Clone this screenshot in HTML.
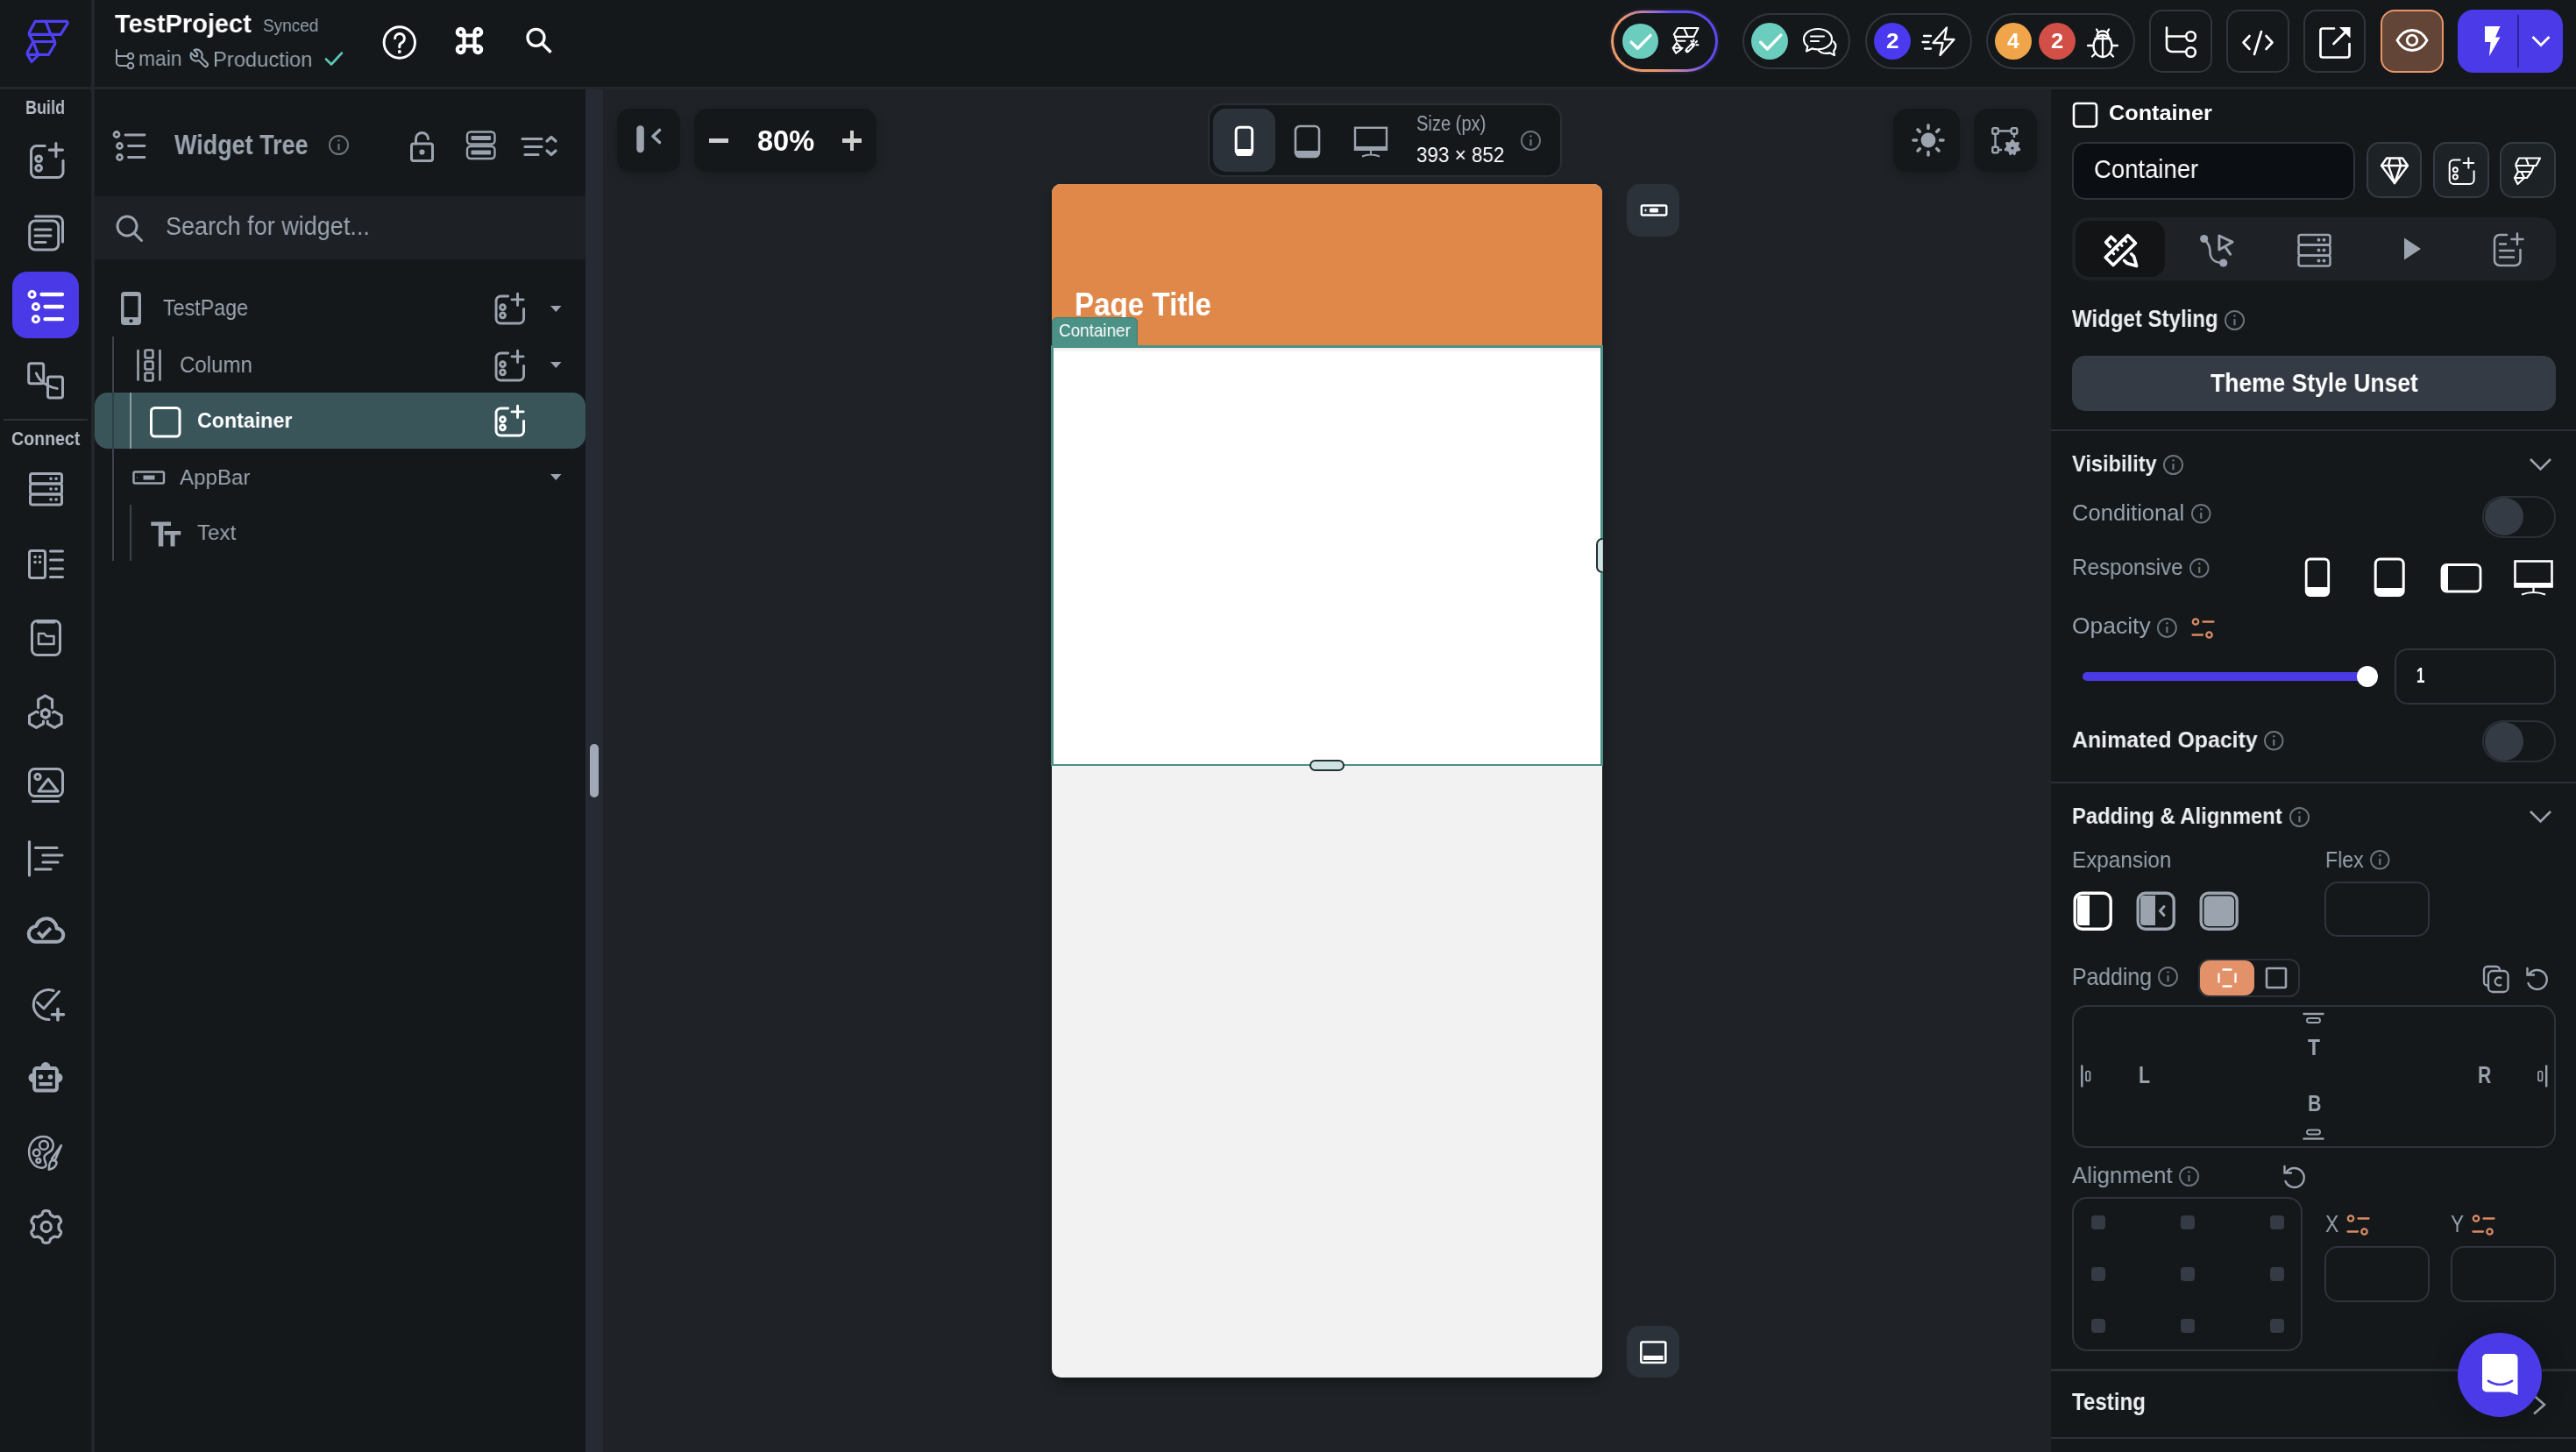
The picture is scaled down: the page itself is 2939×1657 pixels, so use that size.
<!DOCTYPE html>
<html><head><meta charset="utf-8"><title>FlutterFlow</title>
<style>
html,body{margin:0;padding:0;width:2939px;height:1657px;overflow:hidden;background:#14181b;}
body{position:relative;font-family:"Liberation Sans",sans-serif;}
.a{position:absolute;box-sizing:border-box;}
.t{position:absolute;line-height:1;will-change:transform;white-space:nowrap;transform-origin:0 0;font-family:"Liberation Sans",sans-serif;}
svg.a{overflow:visible;}
</style></head><body>
<div class="a" style="left:0.00px;top:0.00px;width:2939.00px;height:1657.00px;background:#14181b"></div>
<div class="a" style="left:688.00px;top:102.00px;width:1652.00px;height:1555.00px;background:#1f2327"></div>
<div class="a" style="left:0.00px;top:99.00px;width:2939.00px;height:2.70px;background:#22272b"></div>
<div class="a" style="left:104.00px;top:0.00px;width:4.00px;height:1657.00px;background:#22272b"></div>
<svg class="a" style="left:20.00px;top:15.00px;" width="70.00" height="65.00" viewBox="0 0 70.00 65.00" fill="none"><g stroke="#5040f5" stroke-width="3.2" stroke-linejoin="round" stroke-linecap="round" transform="translate(-20,-15)">
<path d="M40.1 24.4 H76.4 L77.2 26.6 L69.2 39.4 H33.4 L33.4 37 Z"/>
<path d="M52.2 24.4 L57.8 39.4"/>
<path d="M33.4 39.4 L37.9 47.5 H62.5 L59 39.4"/>
<path d="M37.9 47.5 L31.4 59.5 V62.4 H55.4 L62.8 50 L62.5 47.5"/>
<path d="M38.6 49.5 L43.5 62.4"/>
<path d="M31.4 62.4 L36.1 70.5 L43.5 63"/>
</g></svg>
<div class="t" style="left:131.20px;top:12.45px;font-size:29.36px;color:#ffffff;font-weight:700;transform:scaleX(0.9878);">TestProject</div>
<div class="t" style="left:300.00px;top:18.97px;font-size:20.35px;color:#95a1ac;font-weight:400;transform:scaleX(0.9342);">Synced</div>
<svg class="a" style="left:131.00px;top:55.00px;" width="23.00" height="24.00" viewBox="0 0 23.00 24.00" fill="none"><g stroke="#95a1ac" stroke-width="2" stroke-linecap="round" transform="translate(-131,-55)">
<path d="M133 57 V71 a4 4 0 0 0 4 4 H145.5"/><path d="M133 64 H145.5"/>
<circle cx="149" cy="64" r="3.3"/><circle cx="149" cy="75" r="3.3"/></g></svg>
<div class="t" style="left:158.40px;top:56.11px;font-size:23.50px;color:#95a1ac;font-weight:400;transform:scaleX(0.9735);">main</div>
<svg class="a" style="left:215.00px;top:54.00px;" width="25.00" height="25.00" viewBox="0.5 0.5 23.5 23.5" fill="none"><g stroke="#95a1ac" stroke-width="2" stroke-linecap="round" stroke-linejoin="round"><path d="M7 10h3v-3l-3.5 -3.5a6 6 0 0 1 8 8l6 6a2 2 0 0 1 -3 3l-6 -6a6 6 0 0 1 -8 -8l3.5 3.5"/></g></svg>
<div class="t" style="left:243.00px;top:55.68px;font-size:24.13px;color:#95a1ac;font-weight:400;transform:scaleX(0.9830);">Production</div>
<svg class="a" style="left:370.00px;top:58.00px;" width="22.00" height="19.00" viewBox="0 0 22.00 19.00" fill="none"><path d="M2 9.5 L8 15.5 L20 2.5" stroke="#5ec4b6" stroke-width="2.6" stroke-linecap="round" stroke-linejoin="round"/></svg>
<svg class="a" style="left:436.00px;top:29.00px;" width="40.00" height="40.00" viewBox="0 0 40.00 40.00" fill="none"><circle cx="19.8" cy="19.5" r="17.7" stroke="#fff" stroke-width="2.9"/><path d="M14.6 14.8 a5.4 5.4 0 1 1 7.6 5 c-1.6 .8 -2.4 1.8 -2.4 3.6 v1.4" stroke="#fff" stroke-width="3" stroke-linecap="round"/><circle cx="19.8" cy="30" r="2" fill="#fff"/></svg>
<svg class="a" style="left:520.00px;top:31.40px;" width="31.00" height="30.90" viewBox="0 0 31.00 30.90" fill="none"><path d="M9.5 5.65 V25.35 A3.85 3.85 0 1 1 5.65 21.5 H25.35 A3.85 3.85 0 1 1 21.5 25.35 V5.65 A3.85 3.85 0 1 1 25.35 9.5 H5.65 A3.85 3.85 0 1 1 9.5 5.65 Z" stroke="#fff" stroke-width="4.2" stroke-linejoin="round"/></svg>
<svg class="a" style="left:599.00px;top:30.00px;" width="33.00" height="33.00" viewBox="0 0 33.00 33.00" fill="none"><circle cx="12.5" cy="12.8" r="9.5" stroke="#fff" stroke-width="3.3"/><path d="M19.5 19.8 L29.5 29.8" stroke="#fff" stroke-width="3.6"/></svg>
<div class="a" style="left:1838.00px;top:12.00px;width:122.00px;height:70.00px;border-radius:35px;background:linear-gradient(57deg,#ee9a62 0%,#ec9866 30%,#c583a0 45%,#9a6dd0 56%,#5d4bf3 68%,#5b49f4 100%);box-shadow:0 0 4px rgba(140,100,200,.3)"></div>
<div class="a" style="left:1841.00px;top:15.00px;width:116.00px;height:64.00px;border-radius:32px;background:#14181b"></div>
<div class="a" style="left:1851.00px;top:26.50px;width:40.50px;height:40.50px;border-radius:50%;background:#6bcdbd"></div>
<svg class="a" style="left:1851.00px;top:26.50px;" width="40.50" height="40.50" viewBox="0 0 40.50 40.50" fill="none"><path d="M10.1 21.1 L17.4 28.3 L32.0 13.4" stroke="#fff" stroke-width="3.4" stroke-linecap="round" stroke-linejoin="round"/></svg>
<svg class="a" style="left:1906.00px;top:28.00px;" width="36.00" height="36.00" viewBox="0 0 36.00 36.00" fill="none"><g stroke="#fff" stroke-width="2.1" stroke-linejoin="round" stroke-linecap="round" transform="translate(-1906,-28)">
<path d="M1914.3 32 H1937.5 L1932.4 41.9 H1911.5 L1909.8 39.3 Z"/><path d="M1921.3 32.2 L1925.6 41.9"/>
<path d="M1911 42 L1913 46.8 H1922.5"/>
<path d="M1913 49 L1908.6 54.8 L1912.2 60.6 L1918.6 55.6 L1913 49 M1908.6 54.8 H1919.5"/>
<path d="M1932.3 45.2 V47.3 M1936 47 L1934.6 48.4 M1937.4 51.2 H1935.4 M1929.3 46.8 L1930.3 47.8"/>
</g><path d="M1925 57.6 L1931.4 51.2" stroke="#fff" stroke-width="5.2" stroke-linecap="round" transform="translate(-1906,-28)"/><path d="M1926 56.6 L1929.8 52.8" stroke="#14181b" stroke-width="1.4" stroke-linecap="round" transform="translate(-1906,-28)"/></svg>
<div class="a" style="left:1988.00px;top:15.00px;width:123.00px;height:64.00px;border-radius:32px;border:2px solid #30363d"></div>
<div class="a" style="left:1997.60px;top:25.60px;width:42.80px;height:42.80px;border-radius:50%;background:#6bcdbd"></div>
<svg class="a" style="left:1997.60px;top:25.60px;" width="42.80" height="42.80" viewBox="0 0 42.80 42.80" fill="none"><path d="M10.7 22.3 L18.4 30.0 L33.8 14.1" stroke="#fff" stroke-width="3.4" stroke-linecap="round" stroke-linejoin="round"/></svg>
<svg class="a" style="left:2055.00px;top:30.00px;" width="41.00" height="37.00" viewBox="0 0 41.00 37.00" fill="none"><g stroke="#fff" stroke-width="2.2" stroke-linejoin="round" stroke-linecap="round" transform="translate(-2055,-30)">
<path d="M2074 33 c-9 0 -16 5.2 -16 11.8 c0 3.2 1.6 6 4.3 8.1 l-1.3 5.6 l6.3 -3.1 c2 .6 4.3 .9 6.7 .9 c9 0 16 -5.2 16 -11.5 c0 -6.6 -7 -11.8 -16 -11.8 z"/>
<path d="M2066 41.5 h15 M2066 47 h9"/>
<path d="M2092 47.5 c1.6 1.5 2.4 3.3 2.4 5.3 c0 2 -.8 3.8 -2.3 5.3 l.8 5 l-5 -2.7 c-1.3 .3 -2.7 .5 -4.1 .5 c-3.6 0 -6.8 -1.2 -8.8 -3.2"/>
</g></svg>
<div class="a" style="left:2128.00px;top:15.00px;width:121.50px;height:64.00px;border-radius:32px;border:2px solid #30363d"></div>
<div class="a" style="left:2137.70px;top:25.60px;width:42.70px;height:42.70px;border-radius:50%;background:#4b39ef"></div>
<div class="t" style="left:2152.00px;top:34.68px;font-size:24.71px;color:#ffffff;font-weight:700;transform:scaleX(1.0554);">2</div>
<svg class="a" style="left:2190.00px;top:28.00px;" width="44.00" height="38.00" viewBox="0 0 44.00 38.00" fill="none"><g stroke="#fff" stroke-width="2.3" stroke-linejoin="round" stroke-linecap="round" transform="translate(-2190,-28)">
<path d="M2221 31.5 L2205.5 49 H2216.5 L2213.5 63 L2229.5 45 H2218.5 Z"/>
<path d="M2195 41 h8 M2193.5 48 h7 M2196 55.5 h7"/></g></svg>
<div class="a" style="left:2266.00px;top:15.00px;width:169.60px;height:64.00px;border-radius:32px;border:2px solid #30363d"></div>
<div class="a" style="left:2275.70px;top:25.60px;width:42.40px;height:42.40px;border-radius:50%;background:#f1a54b"></div>
<div class="t" style="left:2290.30px;top:34.68px;font-size:24.71px;color:#ffffff;font-weight:700;">4</div>
<div class="a" style="left:2325.80px;top:25.60px;width:42.40px;height:42.40px;border-radius:50%;background:#d14f46"></div>
<div class="t" style="left:2339.80px;top:34.68px;font-size:24.71px;color:#ffffff;font-weight:700;transform:scaleX(1.0336);">2</div>
<svg class="a" style="left:2379.00px;top:29.00px;" width="40.00" height="38.00" viewBox="0 0 40.00 38.00" fill="none"><g stroke="#fff" stroke-width="2.3" stroke-linecap="round" transform="translate(-2379,-29)">
<ellipse cx="2399" cy="52.5" rx="10.5" ry="12.5"/><path d="M2399 40 V65"/>
<path d="M2390.5 44 h17"/><path d="M2392.5 41 a6.5 5.5 0 0 1 13 0"/>
<path d="M2394 37 l-2 -3.5 M2404 37 l2 -3.5 M2388.5 52 h-6.5 M2409.5 52 h6.5 M2391 60.5 l-4 4 M2407 60.5 l4 4"/>
</g></svg>
<div class="a" style="left:2452.00px;top:11.00px;width:72.00px;height:72.00px;border-radius:15px;border:2px solid #30363d"></div>
<div class="a" style="left:2540.00px;top:11.00px;width:71.50px;height:72.00px;border-radius:15px;border:2px solid #30363d"></div>
<div class="a" style="left:2628.00px;top:11.00px;width:71.00px;height:72.00px;border-radius:15px;border:2px solid #30363d"></div>
<svg class="a" style="left:2468.00px;top:28.00px;" width="40.00" height="40.00" viewBox="0 0 40.00 40.00" fill="none"><g stroke="#fff" stroke-width="2.6" stroke-linecap="round" transform="translate(-2468,-28)">
<path d="M2472 31.5 V53 a6 6 0 0 0 6 6 H2494"/><path d="M2472 41.5 H2494"/>
<circle cx="2499.5" cy="41.5" r="5.3"/><circle cx="2499.5" cy="59.5" r="5.3"/></g></svg>
<svg class="a" style="left:2556.00px;top:33.00px;" width="40.00" height="32.00" viewBox="0 0 40.00 32.00" fill="none"><g stroke="#fff" stroke-width="2.6" stroke-linecap="round" stroke-linejoin="round" transform="translate(-2556,-33)"><path d="M2566.5 41 L2559.5 48.5 L2566.5 56"/><path d="M2585.5 41 L2592.5 48.5 L2585.5 56"/><path d="M2580 36 L2572 62"/></g></svg>
<svg class="a" style="left:2644.00px;top:28.00px;" width="42.00" height="40.00" viewBox="0 0 42.00 40.00" fill="none"><g stroke="#fff" stroke-width="2.7" stroke-linecap="round" stroke-linejoin="round" transform="translate(-2644,-28)">
<path d="M2663 32.5 H2650 a2.5 2.5 0 0 0 -2.5 2.5 V63 a2.5 2.5 0 0 0 2.5 2.5 H2678 a2.5 2.5 0 0 0 2.5 -2.5 V50"/>
<path d="M2662.5 50 L2678 34.5"/></g><path d="M2669 31 H2681.5 V43.5 Z" fill="#fff" transform="translate(-2644,-28)"/></svg>
<div class="a" style="left:2715.80px;top:10.80px;width:72.20px;height:72.40px;border-radius:16px;background:#634537;border:2.6px solid #e99467"></div>
<svg class="a" style="left:2732.00px;top:32.00px;" width="40.00" height="28.00" viewBox="0 0 40.00 28.00" fill="none"><g stroke="#fff" stroke-width="2.8" transform="translate(-2732,-32)">
<path d="M2735 46 C2740 37 2746 34.5 2752 34.5 C2758 34.5 2764 37 2769 46 C2764 55 2758 57.5 2752 57.5 C2746 57.5 2740 55 2735 46 Z"/>
<circle cx="2752" cy="46" r="5.8"/></g></svg>
<div class="a" style="left:2803.70px;top:10.80px;width:120.30px;height:72.40px;border-radius:18px;background:#4a3ae8"></div>
<div class="a" style="left:2871.80px;top:17.00px;width:2.40px;height:60.00px;background:#2c2596"></div>
<svg class="a" style="left:2832.00px;top:28.00px;" width="24.00" height="38.00" viewBox="0 0 24.00 38.00" fill="none"><path d="M2835 30 H2852.5 L2847 42.5 H2852.5 L2840 64.2 L2841.5 48 H2835 Z" fill="#fff" transform="translate(-2832,-28)"/></svg>
<svg class="a" style="left:2886.00px;top:38.00px;" width="26.00" height="19.00" viewBox="0 0 26.00 19.00" fill="none"><path d="M3.5 4 L13 13.5 L22.5 4" stroke="#fff" stroke-width="2.8"/></svg>
<div class="t" style="left:29.00px;top:112.37px;font-size:21.66px;color:#b5bcc6;font-weight:700;transform:scaleX(0.8311);">Build</div>
<svg class="a" style="left:31.70px;top:161.70px;" width="40.50" height="40.50" viewBox="0 0 40.50 40.50" fill="none"><g stroke="#a1a9b5" stroke-width="3.0" stroke-linecap="round" stroke-linejoin="round"><g transform="scale(1.0125)"><path d="M19 4.5 H9.5 a6 6 0 0 0 -6 6 V34 a6 6 0 0 0 6 6 H33.5 a6 6 0 0 0 6 -6 V21"/><path d="M31.5 1.5 V16.5 M24 9 H39"/><circle cx="12" cy="19" r="3.3"/><circle cx="12" cy="29.5" r="3.3"/></g></g></svg>
<svg class="a" style="left:32.00px;top:245.00px;" width="42.00" height="42.00" viewBox="0 0 42.00 42.00" fill="none"><g stroke="#a1a9b5" stroke-width="3" stroke-linecap="round" stroke-linejoin="round"><rect x="1.7" y="7" width="33" height="33" rx="6.5"/><path d="M8.5 2 H33.5 a6 6 0 0 1 6 6 V31"/><path d="M8 17 H26 M8 24 H26 M8 31.5 H20"/></g></svg>
<div class="a" style="left:14.20px;top:309.60px;width:75.80px;height:76.00px;border-radius:17px;background:#4a39e6"></div>
<svg class="a" style="left:31.00px;top:330.00px;" width="42.00" height="41.00" viewBox="0 0 42.00 41.00" fill="none"><g stroke="#fff" stroke-width="3" stroke-linecap="round" stroke-linejoin="round"><circle cx="5.6" cy="6" r="3.5" stroke-width="3.1"/><circle cx="9.9" cy="20" r="3.5" stroke-width="3.1"/><circle cx="9.9" cy="34.2" r="3.5" stroke-width="3.1"/><path d="M16.5 6 H40 M20.5 20 H40 M20.5 34.2 H40" stroke-width="4.3"/></g></svg>
<svg class="a" style="left:31.00px;top:413.00px;" width="42.00" height="42.00" viewBox="0 0 42.00 42.00" fill="none"><g stroke="#a1a9b5" stroke-width="3" stroke-linecap="round" stroke-linejoin="round"><rect x="1.7" y="1.7" width="17" height="23" rx="2.5"/><rect x="23.5" y="17" width="17" height="24" rx="2.5"/><path d="M10.4 13 C14 22 22 28 34.2 30.4"/></g></svg>
<div class="a" style="left:3.80px;top:477.80px;width:96.20px;height:1.80px;background:#2b3036"></div>
<div class="t" style="left:12.70px;top:489.80px;font-size:22.09px;color:#b5bcc6;font-weight:700;transform:scaleX(0.8860);">Connect</div>
<svg class="a" style="left:32.50px;top:539.00px;" width="39.00" height="41.00" viewBox="0 0 39.00 41.00" fill="none"><g stroke="#a1a9b5" stroke-width="3" stroke-linecap="round" stroke-linejoin="round"><rect x="1.5" y="1.5" width="36" height="11.5" rx="2.5"/><rect x="1.5" y="13" width="36" height="12" rx="2.5"/><rect x="1.5" y="25" width="36" height="12" rx="2.5"/><path d="M25 7.3 h.1 M31 7.3 h.1 M25 19 h.1 M31 19 h.1 M25 31 h.1 M31 31 h.1" stroke-width="3.6"/></g></svg>
<svg class="a" style="left:31.50px;top:627.00px;" width="41.00" height="34.00" viewBox="0 0 41.00 34.00" fill="none"><g stroke="#a1a9b5" stroke-width="3" stroke-linecap="round" stroke-linejoin="round"><rect x="1.5" y="1.5" width="18" height="31" rx="2.5"/><path d="M8 8.5 h.1 M13.5 8.5 h.1 M8 14.5 h.1 M13.5 14.5 h.1" stroke-width="3.5"/><path d="M25.5 2 H39.5 M25.5 12 H39.5 M25.5 22 H39.5 M25.5 31.5 H39.5"/></g></svg>
<svg class="a" style="left:34.50px;top:707.00px;" width="35.00" height="42.00" viewBox="0 0 35.00 42.00" fill="none"><g stroke="#a1a9b5" stroke-width="3" stroke-linecap="round" stroke-linejoin="round"><rect x="1.5" y="1.5" width="32" height="39" rx="6"/><path d="M8 3 H27"/><path d="M9 16 H15.5 L18 19 H26.5 V28 H9 Z" stroke-width="2.5"/></g></svg>
<svg class="a" style="left:20.00px;top:780.00px;" width="65.00" height="65.00" viewBox="0 0 65.00 65.00" fill="none"><g stroke="#a1a9b5" stroke-width="3.1" stroke-linecap="round" stroke-linejoin="round"><path d="M23.63 27.60 L23.63 18.40 L31.60 13.80 L39.57 18.40 L39.57 27.60"/><path d="M23.25 33.01 L21.50 32.00 L13.53 36.60 L13.53 45.80 L21.50 50.40 L29.47 45.80 L29.47 43.04"/><path d="M40.45 33.01 L42.20 32.00 L50.17 36.60 L50.17 45.80 L42.20 50.40 L34.23 45.80 L34.23 43.04"/><path d="M31.85 29.30 L36.18 31.80 L36.18 36.80 L31.85 39.30 L27.52 36.80 L27.52 31.80 Z"/></g></svg>
<svg class="a" style="left:31.50px;top:875.50px;" width="41.00" height="41.00" viewBox="0 0 41.00 41.00" fill="none"><g stroke="#a1a9b5" stroke-width="3" stroke-linecap="round" stroke-linejoin="round"><rect x="1.5" y="1.5" width="38" height="31" rx="6"/><circle cx="11" cy="10.5" r="3.2"/><path d="M12 27 L23 13 L34 27 Z"/><path d="M5.5 38.5 H34.5"/></g></svg>
<svg class="a" style="left:31.50px;top:959.00px;" width="41.00" height="41.50" viewBox="0 0 41.00 41.50" fill="none"><g stroke="#a1a9b5" stroke-width="3.2" stroke-linecap="round" stroke-linejoin="round"><path d="M1.5 1.5 V40"/><path d="M8.5 8.5 H33 M17 17 H39 M17 25 H34 M8.5 33 H26"/></g></svg>
<svg class="a" style="left:25.00px;top:1035.00px;" width="55.00" height="55.00" viewBox="0 0 55.00 55.00" fill="none"><g stroke="#a1a9b5" stroke-width="4" stroke-linecap="round" stroke-linejoin="round"><path d="M15.5 39.8 H39.5 A7.6 7.6 0 0 0 39.8 24.6 A12 12 0 0 0 16.3 21.9 A9 9 0 0 0 15.5 39.8 Z"/><path d="M18.4 28.8 L23.3 33.8 L32.8 24.2" stroke-linecap="butt" stroke-linejoin="miter"/></g></svg>
<svg class="a" style="left:33.00px;top:1127.00px;" width="42.50" height="38.00" viewBox="0 0 42.50 38.00" fill="none"><g stroke="#a1a9b5" stroke-width="3" stroke-linecap="round" stroke-linejoin="round"><path d="M28 3.5 a17 17 0 1 0 -5 33"/><path d="M9.5 17 L17 24 L34.5 4.5"/><path d="M33 24.5 V37 M26.5 30.8 H39.5" stroke-width="3.6"/></g></svg>
<svg class="a" style="left:25.00px;top:1200.00px;" width="55.00" height="55.00" viewBox="0 0 55.00 55.00" fill="none"><g stroke="#a1a9b5" stroke-width="4" stroke-linecap="round" stroke-linejoin="round"><rect x="14.1" y="19" width="25.8" height="25.6" rx="3"/><path d="M21.6 17.5 A5.4 5.4 0 0 1 32.4 17.5 Z" fill="#a1a9b5" stroke="none"/><path d="M13 24.4 A5.5 5.5 0 0 0 13 35.4 Z M41 24.4 A5.5 5.5 0 0 1 41 35.4 Z" fill="#a1a9b5" stroke="none"/><circle cx="21.4" cy="29" r="2.8" fill="#a1a9b5" stroke="none"/><circle cx="32.5" cy="29" r="2.8" fill="#a1a9b5" stroke="none"/><rect x="19.5" y="35" width="15.2" height="4.2" fill="#a1a9b5" stroke="none"/></g></svg>
<svg class="a" style="left:25.00px;top:1288.00px;" width="55.00" height="55.00" viewBox="0 0 55.00 55.00" fill="none"><g stroke="#a1a9b5" stroke-width="2.5" stroke-linecap="round" stroke-linejoin="round"><path d="M24.6 8.9 C15 8.9 8.1 16.5 8.1 26.5 C8.1 37 15 44.7 22.5 44.7 C26.5 44.7 28.5 42.5 27.3 39.5 C26 36 24.5 33.5 26 31 C27.5 28.5 31 27.5 33.5 25 C36 22.5 36 17.8 35.4 16.5 C34 11.5 30 8.9 24.6 8.9 Z"/><circle cx="25" cy="18.9" r="4.9"/><circle cx="16.7" cy="27.5" r="3.8"/><circle cx="18.8" cy="36.6" r="2.4"/><path d="M45 19 L37.5 36.5 L34 34.5 Z"/><path d="M33.8 36.5 C31 38 31 42 30.8 46.8 C35.5 45.5 39 43 39.5 39.5 C40 37 36 35.5 33.8 36.5 Z"/></g></svg>
<svg class="a" style="left:32.50px;top:1379.00px;" width="39.50" height="42.00" viewBox="0 0 39.50 42.00" fill="none"><g stroke="#a1a9b5" stroke-width="3.2" stroke-linecap="round" stroke-linejoin="round"><path d="M19.75 2.70 L20.07 2.70 L20.39 2.72 L20.71 2.74 L21.02 2.77 L21.34 2.81 L21.66 2.86 L21.97 2.94 L22.28 3.03 L22.58 3.16 L22.87 3.33 L23.14 3.56 L23.39 3.87 L23.61 4.26 L23.81 4.73 L23.97 5.26 L24.12 5.78 L24.26 6.25 L24.41 6.65 L24.58 6.97 L24.76 7.22 L24.96 7.43 L25.17 7.60 L25.38 7.74 L25.59 7.88 L25.81 8.00 L26.03 8.13 L26.25 8.25 L26.47 8.37 L26.68 8.49 L26.90 8.62 L27.12 8.74 L27.33 8.87 L27.54 9.00 L27.76 9.13 L27.97 9.25 L28.19 9.38 L28.42 9.50 L28.65 9.61 L28.90 9.70 L29.17 9.77 L29.48 9.80 L29.85 9.79 L30.27 9.72 L30.75 9.61 L31.28 9.47 L31.81 9.36 L32.31 9.29 L32.76 9.28 L33.16 9.35 L33.49 9.47 L33.79 9.63 L34.05 9.83 L34.28 10.05 L34.50 10.28 L34.71 10.53 L34.90 10.78 L35.09 11.04 L35.27 11.31 L35.44 11.58 L35.60 11.85 L35.75 12.13 L35.90 12.41 L36.04 12.70 L36.18 12.99 L36.30 13.28 L36.41 13.58 L36.50 13.89 L36.57 14.20 L36.61 14.53 L36.61 14.86 L36.55 15.22 L36.41 15.59 L36.18 15.98 L35.86 16.38 L35.49 16.78 L35.12 17.17 L34.78 17.53 L34.51 17.86 L34.31 18.17 L34.19 18.45 L34.11 18.73 L34.06 18.99 L34.04 19.25 L34.03 19.50 L34.03 19.75 L34.04 20.00 L34.04 20.25 L34.05 20.50 L34.05 20.75 L34.05 21.00 L34.05 21.25 L34.05 21.50 L34.04 21.75 L34.04 22.00 L34.03 22.25 L34.03 22.50 L34.04 22.75 L34.06 23.01 L34.11 23.27 L34.19 23.55 L34.31 23.83 L34.51 24.14 L34.78 24.47 L35.12 24.83 L35.49 25.22 L35.86 25.62 L36.18 26.02 L36.41 26.41 L36.55 26.78 L36.61 27.14 L36.61 27.47 L36.57 27.80 L36.50 28.11 L36.41 28.42 L36.30 28.72 L36.18 29.01 L36.04 29.30 L35.90 29.59 L35.75 29.87 L35.60 30.15 L35.44 30.42 L35.27 30.69 L35.09 30.96 L34.90 31.22 L34.71 31.47 L34.50 31.72 L34.28 31.95 L34.05 32.17 L33.79 32.37 L33.49 32.53 L33.16 32.65 L32.76 32.72 L32.31 32.71 L31.81 32.64 L31.28 32.53 L30.75 32.39 L30.27 32.28 L29.85 32.21 L29.48 32.20 L29.17 32.23 L28.90 32.30 L28.65 32.39 L28.42 32.50 L28.19 32.62 L27.97 32.75 L27.76 32.87 L27.54 33.00 L27.33 33.13 L27.12 33.26 L26.90 33.38 L26.68 33.51 L26.47 33.63 L26.25 33.75 L26.03 33.87 L25.81 34.00 L25.59 34.12 L25.38 34.26 L25.17 34.40 L24.96 34.57 L24.76 34.78 L24.58 35.03 L24.41 35.35 L24.26 35.75 L24.12 36.22 L23.97 36.74 L23.81 37.27 L23.61 37.74 L23.39 38.13 L23.14 38.44 L22.87 38.67 L22.58 38.84 L22.28 38.97 L21.97 39.06 L21.66 39.14 L21.34 39.19 L21.02 39.23 L20.71 39.26 L20.39 39.28 L20.07 39.30 L19.75 39.30 L19.43 39.30 L19.11 39.28 L18.79 39.26 L18.48 39.23 L18.16 39.19 L17.84 39.14 L17.53 39.06 L17.22 38.97 L16.92 38.84 L16.63 38.67 L16.36 38.44 L16.11 38.13 L15.89 37.74 L15.69 37.27 L15.53 36.74 L15.38 36.22 L15.24 35.75 L15.09 35.35 L14.92 35.03 L14.74 34.78 L14.54 34.57 L14.33 34.40 L14.12 34.26 L13.91 34.12 L13.69 34.00 L13.47 33.87 L13.25 33.75 L13.03 33.63 L12.82 33.51 L12.60 33.38 L12.38 33.26 L12.17 33.13 L11.96 33.00 L11.74 32.87 L11.53 32.75 L11.31 32.62 L11.08 32.50 L10.85 32.39 L10.60 32.30 L10.33 32.23 L10.02 32.20 L9.65 32.21 L9.23 32.28 L8.75 32.39 L8.22 32.53 L7.69 32.64 L7.19 32.71 L6.74 32.72 L6.34 32.65 L6.01 32.53 L5.71 32.37 L5.45 32.17 L5.22 31.95 L5.00 31.72 L4.79 31.47 L4.60 31.22 L4.41 30.96 L4.23 30.69 L4.06 30.42 L3.90 30.15 L3.75 29.87 L3.60 29.59 L3.46 29.30 L3.32 29.01 L3.20 28.72 L3.09 28.42 L3.00 28.11 L2.93 27.80 L2.89 27.47 L2.89 27.14 L2.95 26.78 L3.09 26.41 L3.32 26.02 L3.64 25.62 L4.01 25.22 L4.38 24.83 L4.72 24.47 L4.99 24.14 L5.19 23.83 L5.31 23.55 L5.39 23.27 L5.44 23.01 L5.46 22.75 L5.47 22.50 L5.47 22.25 L5.46 22.00 L5.46 21.75 L5.45 21.50 L5.45 21.25 L5.45 21.00 L5.45 20.75 L5.45 20.50 L5.46 20.25 L5.46 20.00 L5.47 19.75 L5.47 19.50 L5.46 19.25 L5.44 18.99 L5.39 18.73 L5.31 18.45 L5.19 18.17 L4.99 17.86 L4.72 17.53 L4.38 17.17 L4.01 16.78 L3.64 16.38 L3.32 15.98 L3.09 15.59 L2.95 15.22 L2.89 14.86 L2.89 14.53 L2.93 14.20 L3.00 13.89 L3.09 13.58 L3.20 13.28 L3.32 12.99 L3.46 12.70 L3.60 12.41 L3.75 12.13 L3.90 11.85 L4.06 11.58 L4.23 11.31 L4.41 11.04 L4.60 10.78 L4.79 10.53 L5.00 10.28 L5.22 10.05 L5.45 9.83 L5.71 9.63 L6.01 9.47 L6.34 9.35 L6.74 9.28 L7.19 9.29 L7.69 9.36 L8.22 9.47 L8.75 9.61 L9.23 9.72 L9.65 9.79 L10.02 9.80 L10.33 9.77 L10.60 9.70 L10.85 9.61 L11.08 9.50 L11.31 9.38 L11.53 9.25 L11.74 9.13 L11.96 9.00 L12.17 8.87 L12.38 8.74 L12.60 8.62 L12.82 8.49 L13.03 8.37 L13.25 8.25 L13.47 8.13 L13.69 8.00 L13.91 7.88 L14.12 7.74 L14.33 7.60 L14.54 7.43 L14.74 7.22 L14.92 6.97 L15.09 6.65 L15.24 6.25 L15.38 5.78 L15.53 5.26 L15.69 4.73 L15.89 4.26 L16.11 3.87 L16.36 3.56 L16.63 3.33 L16.92 3.16 L17.22 3.03 L17.53 2.94 L17.84 2.86 L18.16 2.81 L18.48 2.77 L18.79 2.74 L19.11 2.72 L19.43 2.70 L19.75 2.70 Z"/><circle cx="19.75" cy="21" r="5.6"/></g></svg>
<svg class="a" style="left:129.00px;top:149.00px;" width="38.00" height="37.00" viewBox="0 0 38.00 37.00" fill="none"><g stroke="#9aa3ae" stroke-width="2.8" stroke-linecap="round" stroke-linejoin="round"><circle cx="4" cy="4.5" r="3"/><circle cx="7.5" cy="17.5" r="3"/><circle cx="7.5" cy="30.5" r="3"/><path d="M14 5 H36 M17.5 17.5 H36 M17.5 30.5 H36"/></g></svg>
<div class="t" style="left:199.00px;top:149.86px;font-size:30.52px;color:#9aa3ae;font-weight:700;transform:scaleX(0.8835);">Widget Tree</div>
<svg class="a" style="left:374.90px;top:154.00px;" width="23.00" height="23.00" viewBox="0 0 23.00 23.00" fill="none"><circle cx="11.5" cy="11.5" r="10.55" stroke="#6b747e" stroke-width="1.9"/><path d="M11.5 10.12 V17.25" stroke="#6b747e" stroke-width="2.18"/><circle cx="11.5" cy="6.33" r="1.18" fill="#6b747e"/></svg>
<svg class="a" style="left:467.00px;top:149.00px;" width="29.00" height="37.00" viewBox="0 0 29.00 37.00" fill="none"><g stroke="#9aa3ae" stroke-width="3" stroke-linecap="round" stroke-linejoin="round"><rect x="2.5" y="15" width="24" height="19.5" rx="2.5"/><path d="M7.5 15 V9.5 a7 7 0 0 1 14 0"/><circle cx="14.5" cy="24.5" r="1.6" fill="#9aa3ae"/></g></svg>
<svg class="a" style="left:531.00px;top:148.00px;" width="36.00" height="36.00" viewBox="0 0 36.00 36.00" fill="none"><g stroke="#9aa3ae" stroke-width="2.4" stroke-linecap="round" stroke-linejoin="round"><rect x="2" y="2.5" width="31.5" height="14" rx="4"/><rect x="2" y="19" width="31.5" height="14" rx="4"/><rect x="6.5" y="7" width="22.5" height="5" rx="1" fill="#9aa3ae" stroke="none"/><rect x="6.5" y="23.5" width="22.5" height="5" rx="1" fill="#9aa3ae" stroke="none"/></g></svg>
<svg class="a" style="left:594.00px;top:155.00px;" width="45.00" height="27.00" viewBox="0 0 45.00 27.00" fill="none"><g stroke="#9aa3ae" stroke-width="3.2" stroke-linecap="round" stroke-linejoin="round"><path d="M2 3.5 H24 M5 12.5 H24 M5 21.5 H20"/><path d="M30 6 L35 1.5 L40 6 M30 17 L35 21.5 L40 17"/></g></svg>
<div class="a" style="left:108.00px;top:223.50px;width:560.00px;height:72.50px;background:#1d2126"></div>
<svg class="a" style="left:131.00px;top:244.00px;" width="34.00" height="34.00" viewBox="0 0 34.00 34.00" fill="none"><g stroke="#9aa3ae" stroke-width="3" stroke-linecap="round" stroke-linejoin="round"><circle cx="14" cy="14" r="11"/><path d="M22 22 L30.5 30.5"/></g></svg>
<div class="t" style="left:188.50px;top:244.42px;font-size:28.92px;color:#9aa3ae;font-weight:400;transform:scaleX(0.9351);">Search for widget...</div>
<div class="a" style="left:668.00px;top:102.00px;width:20.00px;height:1555.00px;background:#262a32"></div>
<div class="a" style="left:672.80px;top:849.00px;width:10.20px;height:60.50px;border-radius:6px;background:#a1a9b7"></div>
<svg class="a" style="left:137.00px;top:332.00px;" width="25.00" height="40.00" viewBox="0 0 25.00 40.00" fill="none"><rect x="1" y="1" width="23" height="38" rx="4" fill="#9aa3ae"/><rect x="4.5" y="6" width="16" height="24" fill="#14181b"/><circle cx="12.5" cy="34.2" r="2" fill="#14181b"/></svg>
<div class="t" style="left:186.00px;top:339.35px;font-size:25.58px;color:#9aa3ae;font-weight:400;transform:scaleX(0.9095);">TestPage</div>
<svg class="a" style="left:563.00px;top:334.00px;" width="35.00" height="35.00" viewBox="0 0 35.00 35.00" fill="none"><g stroke="#9aa3ae" stroke-width="3.3246753246753245" stroke-linecap="round" stroke-linejoin="round"><g transform="scale(0.8750)"><path d="M19 4.5 H9.5 a6 6 0 0 0 -6 6 V34 a6 6 0 0 0 6 6 H33.5 a6 6 0 0 0 6 -6 V21"/><path d="M31.5 1.5 V16.5 M24 9 H39"/><circle cx="12" cy="19" r="3.3"/><circle cx="12" cy="29.5" r="3.3"/></g></g></svg>
<svg class="a" style="left:627.60px;top:349.00px;" width="13.00" height="8.00" viewBox="0 0 13.00 8.00" fill="none"><path d="M0 0 H12.5 L6.25 7 Z" fill="#9aa3ae"/></svg>
<div class="a" style="left:128.00px;top:383.50px;width:1.80px;height:256.20px;background:#3d434a"></div>
<svg class="a" style="left:155.00px;top:398.00px;" width="30.00" height="38.00" viewBox="0 0 30.00 38.00" fill="none"><g stroke="#9aa3ae" stroke-width="2.6" stroke-linecap="round" stroke-linejoin="round"><path d="M2.5 2 V35.5 M27.5 2 V35.5"/><rect x="10.5" y="1.5" width="9" height="9" rx="1.5"/><rect x="10.5" y="14.5" width="9" height="9" rx="1.5"/><rect x="10.5" y="27.5" width="9" height="9" rx="1.5"/></g></svg>
<div class="t" style="left:205.30px;top:403.38px;font-size:26.02px;color:#9aa3ae;font-weight:400;transform:scaleX(0.9246);">Column</div>
<svg class="a" style="left:563.00px;top:398.50px;" width="35.00" height="35.00" viewBox="0 0 35.00 35.00" fill="none"><g stroke="#9aa3ae" stroke-width="3.3246753246753245" stroke-linecap="round" stroke-linejoin="round"><g transform="scale(0.8750)"><path d="M19 4.5 H9.5 a6 6 0 0 0 -6 6 V34 a6 6 0 0 0 6 6 H33.5 a6 6 0 0 0 6 -6 V21"/><path d="M31.5 1.5 V16.5 M24 9 H39"/><circle cx="12" cy="19" r="3.3"/><circle cx="12" cy="29.5" r="3.3"/></g></g></svg>
<svg class="a" style="left:627.60px;top:412.60px;" width="13.00" height="8.00" viewBox="0 0 13.00 8.00" fill="none"><path d="M0 0 H12.5 L6.25 7 Z" fill="#9aa3ae"/></svg>
<div class="a" style="left:108.00px;top:448.00px;width:560.00px;height:63.60px;border-radius:15px;background:#39555a"></div>
<div class="a" style="left:128.00px;top:448.00px;width:1.80px;height:63.60px;background:#2f4245"></div>
<div class="a" style="left:147.80px;top:448.00px;width:2.20px;height:63.60px;background:#8a9c9e"></div>
<svg class="a" style="left:170.00px;top:463.00px;" width="38.00" height="38.00" viewBox="0 0 38.00 38.00" fill="none"><rect x="2.5" y="2.5" width="32.5" height="32.5" rx="4" stroke="#fff" stroke-width="3"/></svg>
<div class="t" style="left:224.60px;top:468.08px;font-size:24.71px;color:#ffffff;font-weight:700;transform:scaleX(0.9400);">Container</div>
<svg class="a" style="left:563.00px;top:462.00px;" width="35.00" height="35.00" viewBox="0 0 35.00 35.00" fill="none"><g stroke="#fff" stroke-width="3.3246753246753245" stroke-linecap="round" stroke-linejoin="round"><g transform="scale(0.8750)"><path d="M19 4.5 H9.5 a6 6 0 0 0 -6 6 V34 a6 6 0 0 0 6 6 H33.5 a6 6 0 0 0 6 -6 V21"/><path d="M31.5 1.5 V16.5 M24 9 H39"/><circle cx="12" cy="19" r="3.3"/><circle cx="12" cy="29.5" r="3.3"/></g></g></svg>
<svg class="a" style="left:150.50px;top:537.00px;" width="38.50" height="17.00" viewBox="0 0 38.50 17.00" fill="none"><g stroke="#9aa3ae" stroke-width="2.4" stroke-linecap="round" stroke-linejoin="round"><rect x="1.5" y="1.5" width="34.5" height="13" rx="1.5"/><rect x="12.5" y="5.5" width="13" height="5" fill="#9aa3ae" stroke="none"/><path d="M5.5 8 h.1" stroke-width="1.2"/></g></svg>
<div class="t" style="left:205.30px;top:532.58px;font-size:24.71px;color:#9aa3ae;font-weight:400;transform:scaleX(0.9757);">AppBar</div>
<svg class="a" style="left:627.60px;top:540.70px;" width="13.00" height="8.00" viewBox="0 0 13.00 8.00" fill="none"><path d="M0 0 H12.5 L6.25 7 Z" fill="#9aa3ae"/></svg>
<div class="a" style="left:148.00px;top:575.70px;width:2.00px;height:64.00px;background:#3d434a"></div>
<svg class="a" style="left:171.50px;top:595.00px;" width="35.50" height="29.00" viewBox="0 0 35.50 29.00" fill="none"><path d="M0.3 0.5 H23 V5 H14.3 V28.5 H8.8 V5 H0.3 Z" fill="#9aa3ae"/><path d="M15.5 11 H34.3 V15.5 H27.5 V28.5 H22.5 V15.5 H15.5 Z" fill="#9aa3ae"/></svg>
<div class="t" style="left:224.60px;top:596.08px;font-size:24.71px;color:#9aa3ae;font-weight:400;transform:scaleX(0.9776);">Text</div>
<div class="a" style="left:704.30px;top:124.00px;width:71.70px;height:71.50px;border-radius:15px;background:#15181b;box-shadow:0 4px 12px rgba(0,0,0,.25)"></div>
<svg class="a" style="left:718.00px;top:142.00px;" width="44.00" height="36.00" viewBox="0 0 44.00 36.00" fill="none"><rect x="8.3" y="1.3" width="8.5" height="31" rx="4.2" fill="#9aa3ae"/><path d="M34.5 6.5 L27 13.5 L34.5 20.5" stroke="#9aa3ae" stroke-width="3.6" stroke-linecap="round" stroke-linejoin="round"/></svg>
<div class="a" style="left:792.00px;top:124.00px;width:207.60px;height:71.50px;border-radius:15px;background:#15181b;box-shadow:0 4px 12px rgba(0,0,0,.25)"></div>
<div class="a" style="left:808.60px;top:158.00px;width:22.70px;height:4.50px;background:#cfcfcf"></div>
<div class="t" style="left:863.50px;top:145.46px;font-size:32.41px;color:#ffffff;font-weight:700;transform:scaleX(1.0053);">80%</div>
<div class="a" style="left:960.60px;top:158.00px;width:22.60px;height:4.50px;background:#cfcfcf"></div>
<div class="a" style="left:969.60px;top:148.50px;width:4.60px;height:23.10px;background:#cfcfcf"></div>
<div class="a" style="left:1378.00px;top:118.40px;width:404.00px;height:83.20px;border-radius:17px;background:#15181b;border:2px solid #2a2f36"></div>
<div class="a" style="left:1383.60px;top:124.00px;width:71.70px;height:71.60px;border-radius:15px;background:#2c323a"></div>
<svg class="a" style="left:1408.00px;top:143.00px;" width="24.00" height="37.00" viewBox="0 0 24.00 37.00" fill="none"><rect x="2.2" y="2.2" width="18.5" height="31" rx="4" stroke="#fff" stroke-width="3"/><rect x="2" y="27" width="19" height="8" rx="3" fill="#fff"/></svg>
<svg class="a" style="left:1476.00px;top:142.00px;" width="32.00" height="40.00" viewBox="0 0 32.00 40.00" fill="none"><rect x="2" y="2" width="27" height="35" rx="5" stroke="#9aa3ae" stroke-width="2.6"/><path d="M2 30 H29 V33 a5 5 0 0 1 -5 5 H7 a5 5 0 0 1 -5 -5 Z" fill="#9aa3ae"/></svg>
<svg class="a" style="left:1543.00px;top:143.00px;" width="42.00" height="38.00" viewBox="0 0 42.00 38.00" fill="none"><rect x="3" y="2.8" width="36" height="25" stroke="#9aa3ae" stroke-width="2.4"/><rect x="2" y="24" width="38" height="4.5" fill="#9aa3ae"/><path d="M21 29 V33 M11 35.5 Q21 31.5 31 35.5" stroke="#9aa3ae" stroke-width="2"/></svg>
<div class="t" style="left:1615.70px;top:130.47px;font-size:23.55px;color:#9aa3ae;font-weight:400;transform:scaleX(0.8537);">Size (px)</div>
<div class="t" style="left:1615.70px;top:165.22px;font-size:23.84px;color:#ffffff;font-weight:400;transform:scaleX(0.9398);font-weight:500;">393 × 852</div>
<svg class="a" style="left:1734.90px;top:148.70px;" width="23.00" height="23.00" viewBox="0 0 23.00 23.00" fill="none"><circle cx="11.5" cy="11.5" r="10.55" stroke="#6b747e" stroke-width="1.9"/><path d="M11.5 10.12 V17.25" stroke="#6b747e" stroke-width="2.18"/><circle cx="11.5" cy="6.33" r="1.18" fill="#6b747e"/></svg>
<div class="a" style="left:2160.20px;top:124.00px;width:75.80px;height:72.00px;border-radius:16px;background:#15181b;box-shadow:0 4px 12px rgba(0,0,0,.25)"></div>
<svg class="a" style="left:2178.00px;top:138.00px;" width="44.00" height="44.00" viewBox="0 0 44.00 44.00" fill="none"><circle cx="22" cy="22" r="8.4" fill="#9aa3ae"/><g stroke="#9aa3ae" stroke-width="3.6" stroke-linecap="round"><path d="M22 5 V8.5 M22 35.5 V39 M5 22 H8.5 M35.5 22 H39 M10 10 L12.3 12.3 M31.7 31.7 L34 34 M10 34 L12.3 31.7 M31.7 12.3 L34 10"/></g></svg>
<div class="a" style="left:2252.30px;top:124.00px;width:71.40px;height:72.00px;border-radius:16px;background:#15181b;box-shadow:0 4px 12px rgba(0,0,0,.25)"></div>
<svg class="a" style="left:2270.00px;top:143.00px;" width="36.00" height="36.00" viewBox="0 0 36.00 36.00" fill="none"><g stroke="#9aa3ae" stroke-width="2.4"><rect x="3.3" y="3.3" width="6.5" height="6.5" rx="1.5"/><rect x="24.8" y="3.3" width="6.5" height="6.5" rx="1.5"/><rect x="3.3" y="24.8" width="6.5" height="6.5" rx="1.5"/><path d="M9.8 6.5 H24.8 M6.5 9.8 V24.8 M9.8 28 H14 M28 9.8 V14"/></g><g transform="translate(26,26)"><path d="M0 -8.5 L2.3 -4.8 L6.4 -5.5 L5 -1.5 L7.8 1.7 L3.6 2.4 L2.2 6.6 L0 3.6 L-2.2 6.6 L-3.6 2.4 L-7.8 1.7 L-5 -1.5 L-6.4 -5.5 L-2.3 -4.8 Z" fill="#9aa3ae" stroke="#9aa3ae" stroke-width="3" stroke-linejoin="round"/><circle r="1.6" fill="#15181b"/></g></svg>
<div class="a" style="left:1199.50px;top:209.80px;width:628.80px;height:1362.70px;border-radius:10px;background:#f2f2f2;box-shadow:0 6px 14px rgba(0,0,0,.35);overflow:hidden"></div>
<div class="a" style="left:1199.50px;top:209.80px;width:628.80px;height:184.60px;border-radius:10px 10px 0 0;background:#e0874a"></div>
<div class="t" style="left:1226.00px;top:329.01px;font-size:37.79px;color:#ffffff;font-weight:700;transform:scaleX(0.8772);">Page Title</div>
<div class="a" style="left:1199.50px;top:396.70px;width:628.80px;height:476.30px;background:#ffffff;box-shadow:inset 0 4px 5px -2px rgba(0,0,0,.10)"></div>
<div class="a" style="left:1199.50px;top:394.40px;width:628.80px;height:2.50px;background:#4c9186"></div>
<div class="a" style="left:1199.30px;top:394.40px;width:2.70px;height:479.60px;background:#4c9186"></div>
<div class="a" style="left:1826.00px;top:394.40px;width:2.80px;height:479.60px;background:#4c9186"></div>
<div class="a" style="left:1199.50px;top:871.50px;width:628.80px;height:2.50px;background:#4c9186"></div>
<div class="a" style="left:1199.50px;top:362.30px;width:98.50px;height:32.30px;border-radius:6px 6px 0 0;background:#4c9186;border:1px solid #3f7d74;border-bottom:none"></div>
<div class="t" style="left:1208.00px;top:368.29px;font-size:19.62px;color:#ffffff;font-weight:400;transform:scaleX(0.9638);">Container</div>
<div class="a" style="left:1494.30px;top:867.00px;width:39.40px;height:12.60px;border-radius:7px;background:#cfe4e2;border:2px solid #233033"></div>
<div class="a" style="left:1821.00px;top:613.90px;width:15.00px;height:39.70px;border-radius:7px;background:#cfe4e2;border:2px solid #233033;clip-path:inset(0 7.3px 0 0)"></div>
<div class="a" style="left:1856.40px;top:209.80px;width:59.90px;height:60.20px;border-radius:15px;background:#2c323a"></div>
<svg class="a" style="left:1870.00px;top:232.00px;" width="34.00" height="17.00" viewBox="0 0 34.00 17.00" fill="none"><rect x="2.8" y="2.5" width="28.5" height="11" rx="1.5" stroke="#fff" stroke-width="2.4"/><rect x="12" y="5.5" width="10" height="5" rx="1.5" fill="#fff"/><path d="M6 8 h3 M7.5 6.5 v3" stroke="#fff" stroke-width=".9"/></svg>
<div class="a" style="left:1856.30px;top:1512.60px;width:59.90px;height:59.90px;border-radius:15px;background:#2c323a"></div>
<svg class="a" style="left:1869.00px;top:1529.00px;" width="35.00" height="28.00" viewBox="0 0 35.00 28.00" fill="none"><rect x="3.3" y="2.5" width="28" height="23.5" rx="1.5" stroke="#fff" stroke-width="2.6"/><rect x="6" y="18" width="22.5" height="5" fill="#fff"/></svg>
<svg class="a" style="left:2364.00px;top:116.00px;" width="30.00" height="30.00" viewBox="0 0 30.00 30.00" fill="none"><rect x="2" y="2" width="26" height="26.5" rx="3.5" stroke="#fff" stroke-width="2.6"/></svg>
<div class="t" style="left:2406.00px;top:116.88px;font-size:24.71px;color:#ffffff;font-weight:700;transform:scaleX(1.0224);">Container</div>
<div class="a" style="left:2364.30px;top:162.20px;width:323.10px;height:65.50px;border-radius:15px;background:#0b0f13;border:2px solid #2e343c"></div>
<div class="t" style="left:2388.60px;top:179.39px;font-size:29.07px;color:#ffffff;font-weight:400;transform:scaleX(0.9457);">Container</div>
<div class="a" style="left:2700.00px;top:162.20px;width:63.30px;height:63.60px;border-radius:15px;background:#1d2227;border:2.7px solid #353b45"></div>
<div class="a" style="left:2776.00px;top:162.20px;width:63.50px;height:63.60px;border-radius:15px;background:#1d2227;border:2.7px solid #353b45"></div>
<div class="a" style="left:2852.00px;top:162.20px;width:63.80px;height:63.60px;border-radius:15px;background:#1d2227;border:2.7px solid #353b45"></div>
<svg class="a" style="left:2715.00px;top:178.00px;" width="35.00" height="34.00" viewBox="0 0 35.00 34.00" fill="none"><g stroke="#fff" stroke-width="2.4" stroke-linejoin="round"><path d="M8 2.5 H26 L32 11 L17 31 L2 11 Z"/><path d="M2 11 H32 M12 2.5 L10 11 L17 31 L24 11 L22 2.5"/></g></svg>
<svg class="a" style="left:2792.30px;top:179.30px;" width="31.00" height="31.00" viewBox="0 0 31.00 31.00" fill="none"><g stroke="#fff" stroke-width="2.6" stroke-linecap="round" stroke-linejoin="round"><g transform="scale(0.7750)"><path d="M19 4.5 H9.5 a6 6 0 0 0 -6 6 V34 a6 6 0 0 0 6 6 H33.5 a6 6 0 0 0 6 -6 V21"/><path d="M31.5 1.5 V16.5 M24 9 H39"/><circle cx="12" cy="19" r="3.3"/><circle cx="12" cy="29.5" r="3.3"/></g></g></svg>
<svg class="a" style="left:2866.00px;top:178.00px;" width="38.00" height="35.00" viewBox="0 0 38.00 35.00" fill="none"><g stroke="#fff" stroke-width="2.2" stroke-linejoin="round" transform="translate(-2866,-178)">
<path d="M2874 180.5 H2898 L2893.5 189 H2870.5 L2870.5 187 Z"/><path d="M2882 180.5 L2885 189"/>
<path d="M2870.5 189 L2873 196 H2888 L2891 189"/>
<path d="M2873 196 L2869 203 L2872.5 210 L2880 203 L2876.5 196"/><path d="M2869 203 H2883 L2888 196"/>
</g></svg>
<div class="a" style="left:2364.30px;top:247.80px;width:551.50px;height:72.10px;border-radius:20px;background:#1e2227"></div>
<div class="a" style="left:2367.80px;top:252.00px;width:102.20px;height:63.60px;border-radius:16px;background:#121416"></div>
<svg class="a" style="left:2390.00px;top:255.00px;" width="180.00" height="60.00" viewBox="0 0 180 60" fill="none"><g stroke="#fff" stroke-width="3.6" stroke-linejoin="round" stroke-linecap="round">
<path d="M37.7 13.6 L46.5 22.4 L21 47.5 L12.2 38.8 Z"/>
<path d="M33.2 18.1 L35.8 20.7 M28.5 22.8 L31.1 25.4 M23.8 27.5 L26.4 30.1 M19.1 32.2 L21.7 34.8" stroke-width="3"/>
<path d="M17.4 26.4 L12.6 21.4 L18.5 15.2 L23.4 20.1"/>
<path d="M33.6 42.4 L36.8 45.4 L47.6 48.6 L44.6 37.8 L41.6 34.8"/>
</g>
<g stroke="#9aa3ae" stroke-width="2.6" stroke-linecap="round" stroke-linejoin="round"><path d="M124.7 17.5 C129 22 131.4 26 131.4 31 C131.4 40 135 45 146.7 45"/><path d="M141.9 14 V30 L157 21.2 Z" stroke-width="3"/><path d="M149.3 27.6 L154.6 35.2" stroke-width="3"/></g>
<circle cx="124.7" cy="17.5" r="4.6" fill="#9aa3ae"/><circle cx="146.7" cy="45" r="4.6" fill="#9aa3ae"/></svg>
<svg class="a" style="left:2620.00px;top:265.00px;" width="42.00" height="42.00" viewBox="0 0 42.00 42.00" fill="none"><g stroke="#9aa3ae" stroke-width="2.5"><rect x="2.5" y="3" width="36" height="11.5" rx="2.5"/><rect x="2.5" y="14.5" width="36" height="12" rx="2.5"/><rect x="2.5" y="26.5" width="36" height="12" rx="2.5"/></g>
<g fill="#9aa3ae"><circle cx="25.5" cy="8.8" r="2"/><circle cx="31.5" cy="8.8" r="2"/><circle cx="25.5" cy="20.5" r="2"/><circle cx="31.5" cy="20.5" r="2"/><circle cx="25.5" cy="32.5" r="2"/><circle cx="31.5" cy="32.5" r="2"/></g></svg>
<svg class="a" style="left:2742.00px;top:270.00px;" width="24.00" height="28.00" viewBox="0 0 24.00 28.00" fill="none"><path d="M1 1.5 L20 14 L1 26.5 Z" fill="#9aa3ae"/></svg>
<svg class="a" style="left:2842.00px;top:265.00px;" width="40.00" height="42.00" viewBox="0 0 40.00 42.00" fill="none"><g stroke="#9aa3ae" stroke-width="2.5" stroke-linecap="round"><path d="M18 3 H10 a6 6 0 0 0 -6 6 V32 a6 6 0 0 0 6 6 H27.5 a6 6 0 0 0 6 -6 V20"/><path d="M30 1.5 V14 M23.5 8 H36.5"/><path d="M10 13.5 H17 M10 21 H26 M10 28.5 H26"/></g></svg>
<div class="t" style="left:2364.30px;top:351.26px;font-size:26.74px;color:#eceef0;font-weight:700;transform:scaleX(0.8988);">Widget Styling</div>
<svg class="a" style="left:2538.00px;top:354.30px;" width="23.00" height="23.00" viewBox="0 0 23.00 23.00" fill="none"><circle cx="11.5" cy="11.5" r="10.55" stroke="#6b747e" stroke-width="1.9"/><path d="M11.5 10.12 V17.25" stroke="#6b747e" stroke-width="2.18"/><circle cx="11.5" cy="6.33" r="1.18" fill="#6b747e"/></svg>
<div class="a" style="left:2364.30px;top:406.30px;width:551.50px;height:63.10px;border-radius:15px;background:#353b45"></div>
<div class="t" style="left:2521.50px;top:422.11px;font-size:30.23px;color:#ffffff;font-weight:700;transform:scaleX(0.8758);">Theme Style Unset</div>
<div class="a" style="left:2340.00px;top:489.50px;width:599.00px;height:2.50px;background:#2b3138"></div>
<div class="t" style="left:2364.30px;top:515.61px;font-size:26.45px;color:#eceef0;font-weight:700;transform:scaleX(0.8929);">Visibility</div>
<svg class="a" style="left:2468.30px;top:519.00px;" width="23.00" height="23.00" viewBox="0 0 23.00 23.00" fill="none"><circle cx="11.5" cy="11.5" r="10.55" stroke="#6b747e" stroke-width="1.9"/><path d="M11.5 10.12 V17.25" stroke="#6b747e" stroke-width="2.18"/><circle cx="11.5" cy="6.33" r="1.18" fill="#6b747e"/></svg>
<svg class="a" style="left:2885.00px;top:521.50px;" width="27.00" height="16.00" viewBox="0 0 27.00 16.00" fill="none"><path d="M2 2 L13.5 13.5 L25 2" stroke="#9aa3ae" stroke-width="2.6"/></svg>
<div class="t" style="left:2364.30px;top:572.54px;font-size:25.00px;color:#95a1ac;font-weight:400;transform:scaleX(1.0258);">Conditional</div>
<svg class="a" style="left:2499.70px;top:574.80px;" width="22.50" height="22.50" viewBox="0 0 22.50 22.50" fill="none"><circle cx="11.25" cy="11.25" r="10.30" stroke="#6b747e" stroke-width="1.9"/><path d="M11.25 9.90 V16.88" stroke="#6b747e" stroke-width="2.18"/><circle cx="11.25" cy="6.19" r="1.18" fill="#6b747e"/></svg>
<div class="a" style="left:2832.40px;top:566.00px;width:83.40px;height:47.80px;border-radius:25px;border:2px solid #2b3138"></div>
<div class="a" style="left:2834.70px;top:568.30px;width:44.30px;height:43.20px;border-radius:50%;background:#353b45"></div>
<div class="t" style="left:2364.30px;top:633.85px;font-size:26.16px;color:#95a1ac;font-weight:400;transform:scaleX(0.9268);">Responsive</div>
<svg class="a" style="left:2498.00px;top:636.50px;" width="22.50" height="22.50" viewBox="0 0 22.50 22.50" fill="none"><circle cx="11.25" cy="11.25" r="10.30" stroke="#6b747e" stroke-width="1.9"/><path d="M11.25 9.90 V16.88" stroke="#6b747e" stroke-width="2.18"/><circle cx="11.25" cy="6.19" r="1.18" fill="#6b747e"/></svg>
<svg class="a" style="left:2629.00px;top:636.00px;" width="30.00" height="46.00" viewBox="0 0 30.00 46.00" fill="none"><rect x="2.2" y="2" width="25.5" height="41.5" rx="4.5" stroke="#fff" stroke-width="2.8"/><path d="M2 34 H28 V38 a5 5 0 0 1 -5 5 H7 a5 5 0 0 1 -5 -5 Z" fill="#fff"/></svg>
<svg class="a" style="left:2708.00px;top:636.00px;" width="37.00" height="46.00" viewBox="0 0 37.00 46.00" fill="none"><rect x="2.2" y="2" width="32" height="41.5" rx="5.5" stroke="#fff" stroke-width="3"/><path d="M2 35 H34.5 V37 a6 6 0 0 1 -6 6 H8 a6 6 0 0 1 -6 -6 Z" fill="#fff"/></svg>
<svg class="a" style="left:2784.00px;top:641.00px;" width="48.00" height="35.00" viewBox="0 0 48.00 35.00" fill="none"><rect x="2" y="3.5" width="44" height="30.5" rx="5.5" stroke="#fff" stroke-width="2.8"/><path d="M2 9 V28.5 a6 6 0 0 0 6 5.5 H9 V3.5 H8 a6 6 0 0 0 -6 5.5 Z" fill="#fff"/></svg>
<svg class="a" style="left:2867.00px;top:638.00px;" width="47.00" height="43.00" viewBox="0 0 47.00 43.00" fill="none"><rect x="2.5" y="2.5" width="42" height="29" stroke="#fff" stroke-width="2.6"/><rect x="1.5" y="27" width="44" height="5" fill="#fff"/><path d="M23.5 32 V37.5 M10 40.5 Q23.5 35.5 37 40.5" stroke="#fff" stroke-width="2.2"/></svg>
<div class="t" style="left:2364.30px;top:701.90px;font-size:25.87px;color:#95a1ac;font-weight:400;transform:scaleX(1.0227);">Opacity</div>
<svg class="a" style="left:2461.20px;top:705.30px;" width="22.80" height="22.80" viewBox="0 0 22.80 22.80" fill="none"><circle cx="11.4" cy="11.4" r="10.45" stroke="#6b747e" stroke-width="1.9"/><path d="M11.4 10.03 V17.10" stroke="#6b747e" stroke-width="2.18"/><circle cx="11.4" cy="6.27" r="1.18" fill="#6b747e"/></svg>
<svg class="a" style="left:2499.50px;top:704.80px;" width="27.00" height="25.00" viewBox="0 0 27.00 25.00" fill="none"><g stroke="#d98a62" stroke-width="2.3" stroke-linecap="round"><circle cx="5" cy="4.5" r="3.2"/><path d="M13.5 4.5 H25.5"/><circle cx="20.5" cy="19.5" r="3.2"/><path d="M1.5 19.5 H13"/></g></svg>
<div class="a" style="left:2376.00px;top:767.00px;width:334.00px;height:10.00px;border-radius:5px;background:#4a3ae5"></div>
<div class="a" style="left:2688.90px;top:760.00px;width:24.10px;height:24.00px;border-radius:50%;background:#fff"></div>
<div class="a" style="left:2732.00px;top:740.00px;width:183.80px;height:63.80px;border-radius:15px;border:2px solid #2e343c"></div>
<div class="t" style="left:2756.70px;top:759.08px;font-size:24.71px;color:#ffffff;font-weight:700;transform:scaleX(0.6769);">1</div>
<div class="t" style="left:2364.30px;top:832.35px;font-size:25.58px;color:#eceef0;font-weight:700;transform:scaleX(0.9734);">Animated Opacity</div>
<svg class="a" style="left:2583.00px;top:834.00px;" width="22.50" height="22.50" viewBox="0 0 22.50 22.50" fill="none"><circle cx="11.25" cy="11.25" r="10.30" stroke="#6b747e" stroke-width="1.9"/><path d="M11.25 9.90 V16.88" stroke="#6b747e" stroke-width="2.18"/><circle cx="11.25" cy="6.19" r="1.18" fill="#6b747e"/></svg>
<div class="a" style="left:2832.40px;top:821.70px;width:83.40px;height:48.30px;border-radius:25px;border:2px solid #2b3138"></div>
<div class="a" style="left:2834.70px;top:824.00px;width:44.30px;height:43.70px;border-radius:50%;background:#353b45"></div>
<div class="a" style="left:2340.00px;top:892.00px;width:599.00px;height:2.00px;background:#2b3138"></div>
<div class="t" style="left:2364.30px;top:918.71px;font-size:25.15px;color:#eceef0;font-weight:700;transform:scaleX(0.9463);">Padding &amp; Alignment</div>
<svg class="a" style="left:2611.80px;top:920.50px;" width="23.00" height="23.00" viewBox="0 0 23.00 23.00" fill="none"><circle cx="11.5" cy="11.5" r="10.55" stroke="#6b747e" stroke-width="1.9"/><path d="M11.5 10.12 V17.25" stroke="#6b747e" stroke-width="2.18"/><circle cx="11.5" cy="6.33" r="1.18" fill="#6b747e"/></svg>
<svg class="a" style="left:2885.00px;top:923.50px;" width="27.00" height="16.00" viewBox="0 0 27.00 16.00" fill="none"><path d="M2 2 L13.5 13.5 L25 2" stroke="#9aa3ae" stroke-width="2.6"/></svg>
<div class="t" style="left:2364.30px;top:968.31px;font-size:26.45px;color:#95a1ac;font-weight:400;transform:scaleX(0.9187);">Expansion</div>
<div class="t" style="left:2652.70px;top:968.31px;font-size:26.45px;color:#95a1ac;font-weight:400;transform:scaleX(0.8745);">Flex</div>
<svg class="a" style="left:2703.50px;top:970.00px;" width="22.50" height="22.50" viewBox="0 0 22.50 22.50" fill="none"><circle cx="11.25" cy="11.25" r="10.30" stroke="#6b747e" stroke-width="1.9"/><path d="M11.25 9.90 V16.88" stroke="#6b747e" stroke-width="2.18"/><circle cx="11.25" cy="6.19" r="1.18" fill="#6b747e"/></svg>
<svg class="a" style="left:2365.00px;top:1017.00px;" width="47.00" height="47.00" viewBox="0 0 47.00 47.00" fill="none"><rect x="2.2" y="2.2" width="41" height="41" rx="8.5" stroke="#fff" stroke-width="3.4"/><path d="M8.5 5 H19 V39 H8.5 a3.5 3.5 0 0 1 -3.5 -3.5 V8.5 a3.5 3.5 0 0 1 3.5 -3.5 Z" fill="#fff"/></svg>
<svg class="a" style="left:2437.00px;top:1017.00px;" width="47.00" height="47.00" viewBox="0 0 47.00 47.00" fill="none"><rect x="2.2" y="2.2" width="41" height="41" rx="8.5" stroke="#9aa3ae" stroke-width="3.4"/><path d="M9 5 H22 V39 H9 a4 4 0 0 1 -4 -4 V9 a4 4 0 0 1 4 -4 Z" fill="#9aa3ae"/><path d="M32 17.5 L27.5 22.5 L32 27.5" stroke="#9aa3ae" stroke-width="3" stroke-linecap="round"/></svg>
<svg class="a" style="left:2509.00px;top:1017.00px;" width="47.00" height="47.00" viewBox="0 0 47.00 47.00" fill="none"><rect x="2.2" y="2.2" width="41" height="41" rx="8.5" stroke="#9aa3ae" stroke-width="3.4"/><rect x="5.5" y="5.5" width="34.5" height="34.5" rx="5.5" fill="#9aa3ae"/></svg>
<div class="a" style="left:2652.00px;top:1006.00px;width:119.60px;height:63.40px;border-radius:15px;border:2px solid #2e343c"></div>
<div class="t" style="left:2364.30px;top:1101.74px;font-size:26.89px;color:#95a1ac;font-weight:400;transform:scaleX(0.9221);">Padding</div>
<svg class="a" style="left:2462.40px;top:1103.00px;" width="23.00" height="23.00" viewBox="0 0 23.00 23.00" fill="none"><circle cx="11.5" cy="11.5" r="10.55" stroke="#6b747e" stroke-width="1.9"/><path d="M11.5 10.12 V17.25" stroke="#6b747e" stroke-width="2.18"/><circle cx="11.5" cy="6.33" r="1.18" fill="#6b747e"/></svg>
<div class="a" style="left:2507.80px;top:1094.20px;width:115.80px;height:43.80px;border-radius:12px;border:2px solid #2b3138"></div>
<div class="a" style="left:2509.70px;top:1096.00px;width:61.90px;height:39.60px;border-radius:11px;background:#e39169"></div>
<svg class="a" style="left:2527.00px;top:1102.00px;" width="28.00" height="28.00" viewBox="0 0 28.00 28.00" fill="none"><g stroke="#fff" stroke-width="2.3"><path d="M8.5 4.5 H19.5 M8.5 23.5 H19.5 M4.5 8.5 V19.5 M23.5 8.5 V19.5"/></g></svg>
<svg class="a" style="left:2584.00px;top:1103.00px;" width="26.00" height="26.00" viewBox="0 0 26.00 26.00" fill="none"><rect x="2" y="2" width="22" height="22" rx="1.5" stroke="#9aa3ae" stroke-width="2.6"/></svg>
<svg class="a" style="left:2832.00px;top:1101.00px;" width="32.00" height="33.00" viewBox="0 0 32.00 33.00" fill="none"><g stroke="#9aa3ae" stroke-width="2.3"><path d="M7 23.5 H5.5 a3.5 3.5 0 0 1 -3.5 -3.5 V6 a4 4 0 0 1 4 -4 H16 a4 4 0 0 1 4 4 V7"/><rect x="7" y="7" width="22.5" height="24" rx="5"/><path d="M22 15.5 a4.5 4.5 0 1 0 0 7"/></g></svg>
<svg class="a" style="left:2880.50px;top:1103.00px;" width="27.00" height="28.00" viewBox="0 0 27.00 28.00" fill="none"><g stroke="#9aa3ae" stroke-width="2.4" stroke-linecap="round"><path d="M4.5 9 A11 11 0 1 1 3.5 19"/><path d="M2.5 2 V9.5 H10"/></g></svg>
<div class="a" style="left:2364.30px;top:1146.50px;width:551.50px;height:163.20px;border-radius:17px;border:2px solid #2e343c"></div>
<svg class="a" style="left:2626.00px;top:1155.00px;" width="28.00" height="13.00" viewBox="0 0 28.00 13.00" fill="none"><path d="M1.5 2 H25.5" stroke="#9aa3ae" stroke-width="2.4"/><rect x="6" y="7" width="15" height="5" rx="2.5" stroke="#9aa3ae" stroke-width="1.9"/></svg>
<svg class="a" style="left:2626.00px;top:1288.00px;" width="28.00" height="13.00" viewBox="0 0 28.00 13.00" fill="none"><path d="M1.5 11.5 H25.5" stroke="#9aa3ae" stroke-width="2.4"/><rect x="6" y="1.5" width="15" height="5" rx="2.5" stroke="#9aa3ae" stroke-width="1.9"/></svg>
<svg class="a" style="left:2372.50px;top:1214.00px;" width="13.50" height="28.00" viewBox="0 0 13.50 28.00" fill="none"><path d="M2.3 1.5 V26.5" stroke="#9aa3ae" stroke-width="2.4"/><rect x="7" y="8.5" width="4.5" height="11" rx="2" stroke="#9aa3ae" stroke-width="1.7"/></svg>
<svg class="a" style="left:2894.00px;top:1214.00px;" width="13.50" height="28.00" viewBox="0 0 13.50 28.00" fill="none"><path d="M11.2 1.5 V26.5" stroke="#9aa3ae" stroke-width="2.4"/><rect x="2" y="8.5" width="4.5" height="11" rx="2" stroke="#9aa3ae" stroke-width="1.7"/></svg>
<div class="t" style="left:2633.00px;top:1181.85px;font-size:26.16px;color:#9aa3ae;font-weight:700;transform:scaleX(0.8633);">T</div>
<div class="t" style="left:2440.00px;top:1213.76px;font-size:26.74px;color:#9aa3ae;font-weight:700;transform:scaleX(0.7956);">L</div>
<div class="t" style="left:2826.50px;top:1213.76px;font-size:26.74px;color:#9aa3ae;font-weight:700;transform:scaleX(0.7924);">R</div>
<div class="t" style="left:2632.60px;top:1245.78px;font-size:26.60px;color:#9aa3ae;font-weight:700;transform:scaleX(0.8019);">B</div>
<div class="t" style="left:2364.30px;top:1327.78px;font-size:26.60px;color:#95a1ac;font-weight:400;transform:scaleX(0.9697);">Alignment</div>
<svg class="a" style="left:2486.00px;top:1330.50px;" width="23.00" height="23.00" viewBox="0 0 23.00 23.00" fill="none"><circle cx="11.5" cy="11.5" r="10.55" stroke="#6b747e" stroke-width="1.9"/><path d="M11.5 10.12 V17.25" stroke="#6b747e" stroke-width="2.18"/><circle cx="11.5" cy="6.33" r="1.18" fill="#6b747e"/></svg>
<svg class="a" style="left:2604.00px;top:1329.00px;" width="27.00" height="28.00" viewBox="0 0 27.00 28.00" fill="none"><g stroke="#9aa3ae" stroke-width="2.4" stroke-linecap="round"><path d="M4.5 9 A11 11 0 1 1 3.5 19"/><path d="M2.5 2 V9.5 H10"/></g></svg>
<div class="a" style="left:2364.30px;top:1366.00px;width:263.10px;height:175.50px;border-radius:17px;border:2px solid #2e343c"></div>
<div class="a" style="left:2386.30px;top:1387.40px;width:16.00px;height:16.00px;border-radius:4px;background:#353b45"></div>
<div class="a" style="left:2386.30px;top:1446.00px;width:16.00px;height:16.00px;border-radius:4px;background:#353b45"></div>
<div class="a" style="left:2386.30px;top:1504.60px;width:16.00px;height:16.00px;border-radius:4px;background:#353b45"></div>
<div class="a" style="left:2488.00px;top:1387.40px;width:16.00px;height:16.00px;border-radius:4px;background:#353b45"></div>
<div class="a" style="left:2488.00px;top:1446.00px;width:16.00px;height:16.00px;border-radius:4px;background:#353b45"></div>
<div class="a" style="left:2488.00px;top:1504.60px;width:16.00px;height:16.00px;border-radius:4px;background:#353b45"></div>
<div class="a" style="left:2589.60px;top:1387.40px;width:16.00px;height:16.00px;border-radius:4px;background:#353b45"></div>
<div class="a" style="left:2589.60px;top:1446.00px;width:16.00px;height:16.00px;border-radius:4px;background:#353b45"></div>
<div class="a" style="left:2589.60px;top:1504.60px;width:16.00px;height:16.00px;border-radius:4px;background:#353b45"></div>
<div class="t" style="left:2652.70px;top:1383.66px;font-size:26.74px;color:#95a1ac;font-weight:400;transform:scaleX(0.8577);">X</div>
<svg class="a" style="left:2677.00px;top:1386.00px;" width="27.00" height="25.00" viewBox="0 0 27.00 25.00" fill="none"><g stroke="#d98a62" stroke-width="2.3" stroke-linecap="round"><circle cx="5" cy="4.5" r="3.2"/><path d="M13.5 4.5 H25.5"/><circle cx="20.5" cy="19.5" r="3.2"/><path d="M1.5 19.5 H13"/></g></svg>
<div class="t" style="left:2796.00px;top:1383.66px;font-size:26.74px;color:#95a1ac;font-weight:400;transform:scaleX(0.8409);">Y</div>
<svg class="a" style="left:2820.00px;top:1386.00px;" width="27.00" height="25.00" viewBox="0 0 27.00 25.00" fill="none"><g stroke="#d98a62" stroke-width="2.3" stroke-linecap="round"><circle cx="5" cy="4.5" r="3.2"/><path d="M13.5 4.5 H25.5"/><circle cx="20.5" cy="19.5" r="3.2"/><path d="M1.5 19.5 H13"/></g></svg>
<div class="a" style="left:2652.00px;top:1422.00px;width:119.60px;height:64.00px;border-radius:15px;border:2px solid #2e343c"></div>
<div class="a" style="left:2796.00px;top:1422.00px;width:119.80px;height:64.00px;border-radius:15px;border:2px solid #2e343c"></div>
<div class="a" style="left:2340.00px;top:1561.60px;width:599.00px;height:3.10px;background:#2b3138"></div>
<div class="t" style="left:2364.30px;top:1587.36px;font-size:26.74px;color:#eceef0;font-weight:700;transform:scaleX(0.9012);">Testing</div>
<svg class="a" style="left:2888.00px;top:1590.00px;" width="19.00" height="26.00" viewBox="0 0 19.00 26.00" fill="none"><path d="M3 2.5 L15 13 L3 23.5" stroke="#9aa3ae" stroke-width="2.6"/></svg>
<div class="a" style="left:2340.00px;top:1639.60px;width:599.00px;height:2.40px;background:#2b3138"></div>
<div class="a" style="left:2804.00px;top:1520.70px;width:96.20px;height:96.30px;border-radius:50%;background:#4a3ae8;box-shadow:0 2px 30px rgba(0,0,0,.25)"></div>
<svg class="a" style="left:2828.00px;top:1543.00px;" width="48.00" height="51.00" viewBox="0 0 48.00 51.00" fill="none"><path d="M9 2 H39.5 a5 5 0 0 1 5 5 V49 L35 45.5 H9 a5 5 0 0 1 -5 -5 V7 a5 5 0 0 1 5 -5 Z" fill="#fff"/><path d="M11 32.8 Q24.5 41.3 38 32.8" stroke="#4a3ae8" stroke-width="2.6" stroke-linecap="round"/></svg>
</body></html>
